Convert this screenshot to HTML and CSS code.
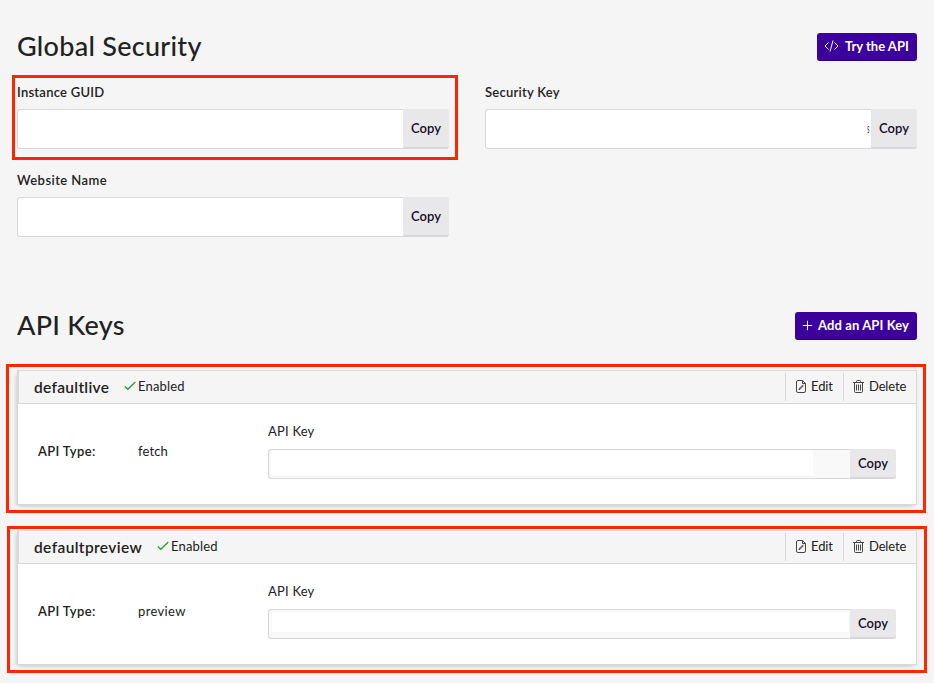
FILE: index.html
```html
<!DOCTYPE html>
<html lang="en">
<head>
<meta charset="utf-8">
<title>API Settings</title>
<link rel="stylesheet" href="styles.css">
</head>
<body>
<svg class="sprite" aria-hidden="true">
  <symbol id="code" viewBox="0 0 15 12"><path d="M4.500 2.500 1 6l3.500 3.500M10.500 2.500 14 6l-3.500 3.500M9 .5 6 11.500"/></symbol>
  <symbol id="plus" viewBox="0 0 11 11"><path d="M5.500.8v9.400M.8 5.500h9.400"/></symbol>
  <symbol id="check" viewBox="0 0 12 10"><path d="M.8 5.500 3.800 8.300 11.300 1"/></symbol>
  <symbol id="edit" viewBox="0 0 10 13"><path d="M6.500.5H2Q.5.5.5 2v9q0 1.500 1.500 1.500h6q1.500 0 1.500-1.500V3.500zM6.500.5v3h3M3 9.700l.5-1.500L7 4.700M3 9.700l1.300-.6L7.500 5.700"/></symbol>
  <symbol id="trash" viewBox="0 0 11 13"><path d="M0 2.500h11M3.500 2.500v-1q0-1 1-1h2q1 0 1 1v1M1.500 2.500v8.800q0 1.200 1.200 1.200h5.600q1.200 0 1.200-1.200V2.500M3.500 4.500v6M5.500 4.500v6M7.500 4.500v6"/></symbol>
</svg>
<main class="page">
  <section class="security">
    <header class="section-head">
      <h1 class="title title-security">Global Security</h1>
      <button class="primary primary-try"><svg class="icon-code"><use href="#code"/></svg><span class="try-text">Try the API</span></button>
    </header>
    <div class="fields">
      <div class="field highlighted">
        <label class="label guid-label">Instance GUID</label>
        <div class="control"><div class="input"></div><button class="copy">Copy</button></div>
        <span class="outline outline-guid"></span>
      </div>
      <div class="field">
        <label class="label security-label">Security Key</label>
        <div class="control"><div class="input"><span class="remnant">s</span></div><button class="copy">Copy</button></div>
      </div>
      <div class="field">
        <label class="label website-label">Website Name</label>
        <div class="control"><div class="input"></div><button class="copy">Copy</button></div>
      </div>
    </div>
  </section>
  <section class="keys">
    <header class="section-head">
      <h1 class="title title-keys">API Keys</h1>
      <button class="primary primary-add"><svg class="icon-plus"><use href="#plus"/></svg><span class="add-text">Add an API Key</span></button>
    </header>
    <div class="cards">
      <article class="card highlighted">
        <header class="card-head">
          <h2 class="name name-live">defaultlive</h2>
          <span class="status"><svg class="icon-check"><use href="#check"/></svg>Enabled</span>
          <button class="action edit"><svg class="icon-edit"><use href="#edit"/></svg><span class="action-text">Edit</span></button>
          <button class="action delete"><svg class="icon-trash"><use href="#trash"/></svg><span class="action-text">Delete</span></button>
        </header>
        <div class="card-body">
          <span class="type-label">API Type:</span>
          <span class="type-value fetch">fetch</span>
          <div class="key">
            <label class="key-label">API Key</label>
            <div class="control small"><div class="input readonly"><span class="mask mask-live"></span></div><button class="copy">Copy</button></div>
          </div>
        </div>
        <span class="outline outline-live"></span>
      </article>
      <article class="card highlighted">
        <header class="card-head">
          <h2 class="name name-preview">defaultpreview</h2>
          <span class="status"><svg class="icon-check"><use href="#check"/></svg>Enabled</span>
          <button class="action edit"><svg class="icon-edit"><use href="#edit"/></svg><span class="action-text">Edit</span></button>
          <button class="action delete"><svg class="icon-trash"><use href="#trash"/></svg><span class="action-text">Delete</span></button>
        </header>
        <div class="card-body">
          <span class="type-label">API Type:</span>
          <span class="type-value preview">preview</span>
          <div class="key">
            <label class="key-label">API Key</label>
            <div class="control small"><div class="input readonly"><span class="mask"></span></div><button class="copy">Copy</button></div>
          </div>
        </div>
        <span class="outline outline-preview"></span>
      </article>
    </div>
  </section>
</main>
</body>
</html>
```
FILE: styles.css
```css
* { box-sizing: border-box; }
body {
  margin: 0;
  background: #f5f5f5;
  color: #222;
  font: 13px/20px Lato, "Noto Sans", sans-serif;
  overflow: hidden;
}
button { font: inherit; color: inherit; border: 0; margin: 0; padding: 0; white-space: nowrap; }
svg { fill: none; stroke: currentColor; flex: none; }
.sprite { display: none; }
.page { height: 683px; padding: 33px 17px 0; }
.section-head { display: flex; justify-content: space-between; height: 28px; }
.title { margin: 0; font-size: 27px; line-height: 26px; font-weight: 500; white-space: nowrap; }
.title-security { letter-spacing: .28px; }
.title-keys { letter-spacing: .25px; }
.primary {
  display: flex;
  align-items: center;
  height: 28px;
  padding: 0 0 1px 7px;
  border-radius: 3px;
  border-bottom: 1px solid #2f0080;
  background: #3c009d;
  color: #fff;
  font-weight: 700;
}
.primary-try { width: 100px; gap: 6px; }
.primary-add { width: 122px; gap: 5px; letter-spacing: .1px; }
.icon-code { width: 15px; height: 12px; }
.icon-plus { width: 11px; height: 11px; }
.fields { display: grid; grid-template-columns: 432px 432px; column-gap: 36px; row-gap: 21px; padding-top: 21px; }
.field { height: 67px; }
.highlighted { position: relative; }
.label { display: block; height: 27px; font-weight: 600; letter-spacing: .25px; white-space: nowrap; }
.website-label { letter-spacing: .45px; }
.control { display: flex; height: 40px; }
.input {
  flex: 1;
  display: flex;
  align-items: center;
  justify-content: flex-end;
  border: 1px solid #d8d8da;
  border-right: 0;
  border-radius: 3px 0 0 3px;
  background: #fff;
}
.remnant { padding: 0 5px 2px 0; font-size: 14px; transform: scaleX(.35); transform-origin: right; }
.copy {
  width: 46px;
  border-bottom: 2px solid #d8d8da;
  border-radius: 0 3px 3px 0;
  background: #e8e8ea;
  color: #160f29;
  font-weight: 600;
}
.outline { position: absolute; border: 3px solid #ff2600; pointer-events: none; }
.outline-guid { inset: -7px -9px -11px -5px; }
.keys { padding-top: 75px; }
.cards { display: grid; gap: 25px; padding-top: 30px; }
.card { height: 135px; border: 1px solid #d8d8da; background: #fff; box-shadow: 0 3px 5px -2px #0002, -3px 2px 4px -2px #0002; }
.card-head { display: flex; align-items: center; height: 33px; padding-left: 15px; border-bottom: 1px solid #d8d8da; border-left: 1px solid #d8d8da; background: #f5f5f5; }
.name { margin: 0; font-size: 15.500px; line-height: 20px; font-weight: 600; letter-spacing: .3px; white-space: nowrap; }
.name-live { width: 90px; }
.name-preview { width: 123px; letter-spacing: .38px; }
.status { display: flex; align-items: center; gap: 2px; flex: 1; padding-bottom: 2px; letter-spacing: .15px; }
.icon-check { width: 12px; height: 10px; stroke: #289b2e; stroke-width: 1.200; }
.action { display: flex; align-items: center; height: 28px; padding: 0 0 2px 10px; border-left: 1px solid #d8d8da; background: transparent; }
.edit { width: 58px; gap: 5px; letter-spacing: -.1px; }
.delete { width: 73px; gap: 5px; padding-left: 9px; letter-spacing: -.15px; }
.icon-edit { width: 10px; height: 13px; stroke: #444; }
.icon-trash { width: 11px; height: 13px; stroke: #444; }
.card-body { display: grid; grid-template-columns: 100px 130px 628px; padding: 17px 0 0 20px; }
.type-label, .type-value { padding-top: 20px; }
.type-label { font-weight: 600; letter-spacing: .35px; }
.fetch { letter-spacing: .15px; }
.preview { letter-spacing: .35px; }
.key-label { display: block; height: 28px; letter-spacing: .2px; }
.small { height: 30px; }
.readonly { justify-content: flex-start; background: #f9f9f9; }
.mask { width: 577px; height: 20px; margin: 0 0 4px 3px; background: #fff; }
.mask-live { width: 542px; height: 24px; margin: 0 0 2px 2px; }
.outline-live { inset: -7px -10px -9px -12px; }
.outline-preview { inset: -5px -11px -9px -11px; }
```
